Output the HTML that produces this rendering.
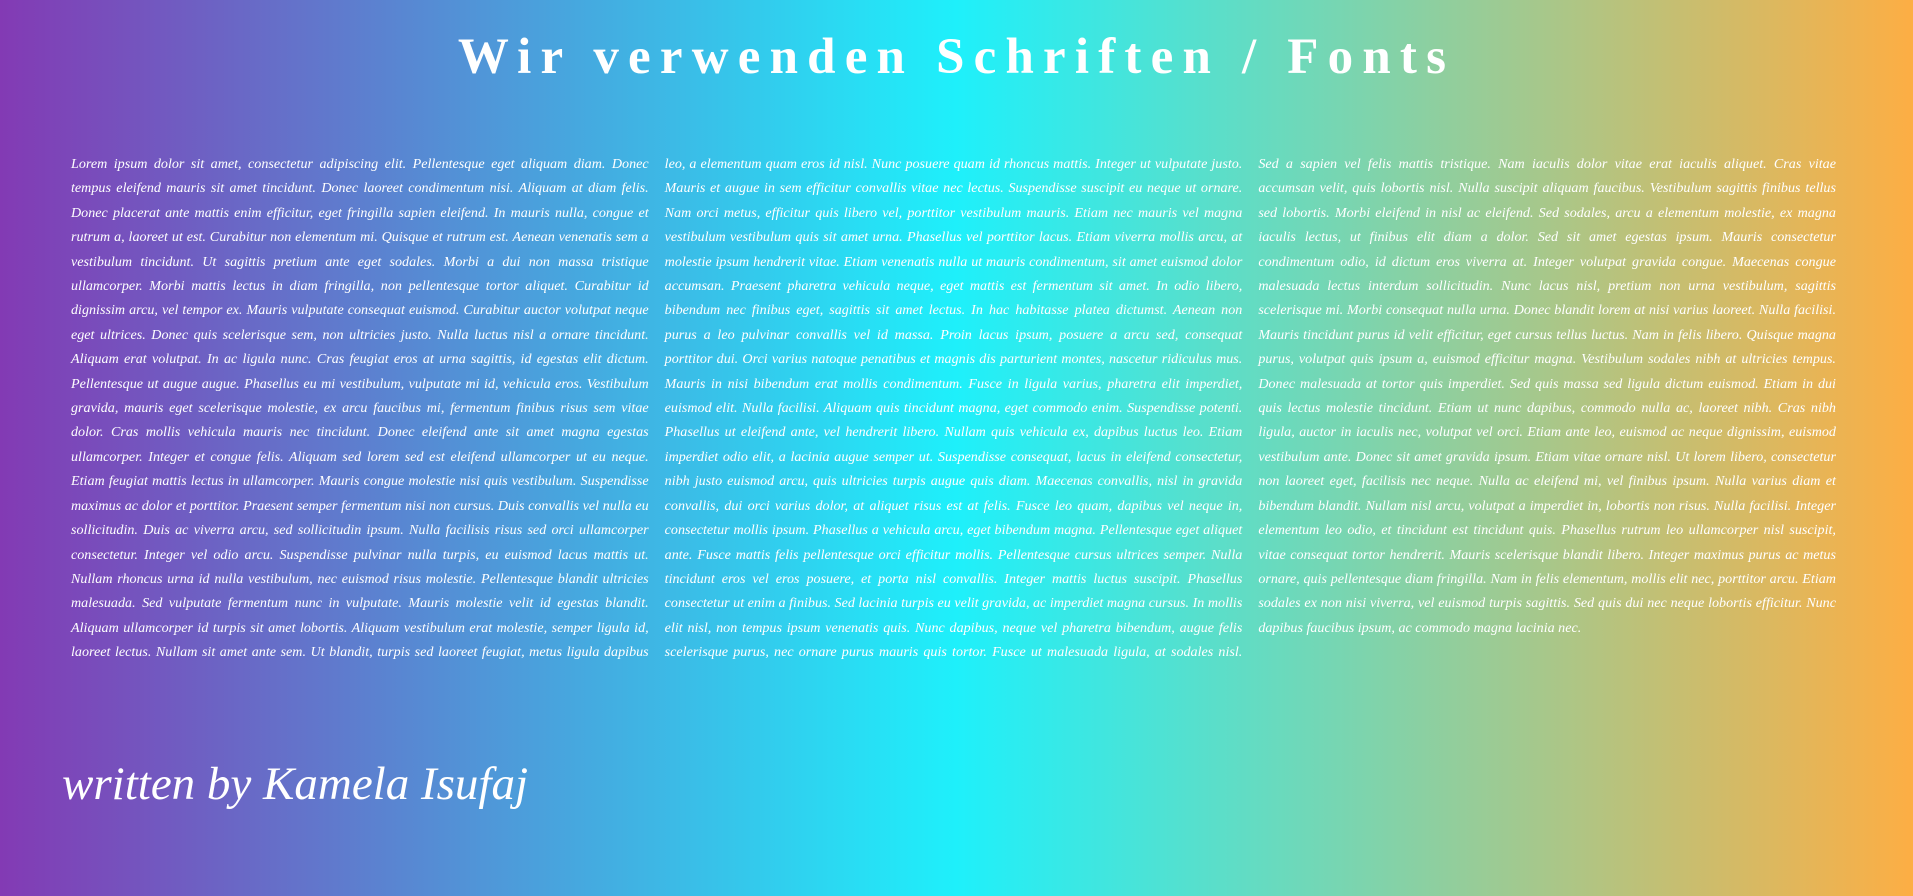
<!DOCTYPE html>
<html><head><meta charset="utf-8"><style>
html,body{margin:0;padding:0;width:1913px;height:896px;overflow:hidden}
body{background:linear-gradient(to right,#833ab4 0%,#1ef0fb 50%,#fdae44 100%);color:#fff;position:relative;font-family:"Liberation Serif",serif}
h1{position:absolute;top:22px;left:0;width:1913px;text-align:center;margin:0;font-size:51px;font-weight:bold;letter-spacing:9.2px;line-height:70px}
.txt{position:absolute;left:71px;top:152px;width:1765px;column-count:3;column-gap:16px;font-style:italic;font-size:14.1px;line-height:24.4px;text-align:justify;height:520px;column-fill:auto}
.sig{position:absolute;left:62px;top:744px;font-style:italic;font-size:47px;line-height:80px;font-family:"Liberation Serif",serif}
</style></head><body>
<h1>Wir verwenden Schriften / Fonts</h1>
<div class="txt">Lorem ipsum dolor sit amet, consectetur adipiscing elit. Pellentesque eget aliquam diam. Donec tempus eleifend mauris sit amet tincidunt. Donec laoreet condimentum nisi. Aliquam at diam felis. Donec placerat ante mattis enim efficitur, eget fringilla sapien eleifend. In mauris nulla, congue et rutrum a, laoreet ut est. Curabitur non elementum mi. Quisque et rutrum est. Aenean venenatis sem a vestibulum tincidunt. Ut sagittis pretium ante eget sodales. Morbi a dui non massa tristique ullamcorper. Morbi mattis lectus in diam fringilla, non pellentesque tortor aliquet. Curabitur id dignissim arcu, vel tempor ex. Mauris vulputate consequat euismod. Curabitur auctor volutpat neque eget ultrices. Donec quis scelerisque sem, non ultricies justo. Nulla luctus nisl a ornare tincidunt. Aliquam erat volutpat. In ac ligula nunc. Cras feugiat eros at urna sagittis, id egestas elit dictum. Pellentesque ut augue augue. Phasellus eu mi vestibulum, vulputate mi id, vehicula eros. Vestibulum gravida, mauris eget scelerisque molestie, ex arcu faucibus mi, fermentum finibus risus sem vitae dolor. Cras mollis vehicula mauris nec tincidunt. Donec eleifend ante sit amet magna egestas ullamcorper. Integer et congue felis. Aliquam sed lorem sed est eleifend ullamcorper ut eu neque. Etiam feugiat mattis lectus in ullamcorper. Mauris congue molestie nisi quis vestibulum. Suspendisse maximus ac dolor et porttitor. Praesent semper fermentum nisi non cursus. Duis convallis vel nulla eu sollicitudin. Duis ac viverra arcu, sed sollicitudin ipsum. Nulla facilisis risus sed orci ullamcorper consectetur. Integer vel odio arcu. Suspendisse pulvinar nulla turpis, eu euismod lacus mattis ut. Nullam rhoncus urna id nulla vestibulum, nec euismod risus molestie. Pellentesque blandit ultricies malesuada. Sed vulputate fermentum nunc in vulputate. Mauris molestie velit id egestas blandit. Aliquam ullamcorper id turpis sit amet lobortis. Aliquam vestibulum erat molestie, semper ligula id, laoreet lectus. Nullam sit amet ante sem. Ut blandit, turpis sed laoreet feugiat, metus ligula dapibus leo, a elementum quam eros id nisl. Nunc posuere quam id rhoncus mattis. Integer ut vulputate justo. Mauris et augue in sem efficitur convallis vitae nec lectus. Suspendisse suscipit eu neque ut ornare. Nam orci metus, efficitur quis libero vel, porttitor vestibulum mauris. Etiam nec mauris vel magna vestibulum vestibulum quis sit amet urna. Phasellus vel porttitor lacus. Etiam viverra mollis arcu, at molestie ipsum hendrerit vitae. Etiam venenatis nulla ut mauris condimentum, sit amet euismod dolor accumsan. Praesent pharetra vehicula neque, eget mattis est fermentum sit amet. In odio libero, bibendum nec finibus eget, sagittis sit amet lectus. In hac habitasse platea dictumst. Aenean non purus a leo pulvinar convallis vel id massa. Proin lacus ipsum, posuere a arcu sed, consequat porttitor dui. Orci varius natoque penatibus et magnis dis parturient montes, nascetur ridiculus mus. Mauris in nisi bibendum erat mollis condimentum. Fusce in ligula varius, pharetra elit imperdiet, euismod elit. Nulla facilisi. Aliquam quis tincidunt magna, eget commodo enim. Suspendisse potenti. Phasellus ut eleifend ante, vel hendrerit libero. Nullam quis vehicula ex, dapibus luctus leo. Etiam imperdiet odio elit, a lacinia augue semper ut. Suspendisse consequat, lacus in eleifend consectetur, nibh justo euismod arcu, quis ultricies turpis augue quis diam. Maecenas convallis, nisl in gravida convallis, dui orci varius dolor, at aliquet risus est at felis. Fusce leo quam, dapibus vel neque in, consectetur mollis ipsum. Phasellus a vehicula arcu, eget bibendum magna. Pellentesque eget aliquet ante. Fusce mattis felis pellentesque orci efficitur mollis. Pellentesque cursus ultrices semper. Nulla tincidunt eros vel eros posuere, et porta nisl convallis. Integer mattis luctus suscipit. Phasellus consectetur ut enim a finibus. Sed lacinia turpis eu velit gravida, ac imperdiet magna cursus. In mollis elit nisl, non tempus ipsum venenatis quis. Nunc dapibus, neque vel pharetra bibendum, augue felis scelerisque purus, nec ornare purus mauris quis tortor. Fusce ut malesuada ligula, at sodales nisl. Sed a sapien vel felis mattis tristique. Nam iaculis dolor vitae erat iaculis aliquet. Cras vitae accumsan velit, quis lobortis nisl. Nulla suscipit aliquam faucibus. Vestibulum sagittis finibus tellus sed lobortis. Morbi eleifend in nisl ac eleifend. Sed sodales, arcu a elementum molestie, ex magna iaculis lectus, ut finibus elit diam a dolor. Sed sit amet egestas ipsum. Mauris consectetur condimentum odio, id dictum eros viverra at. Integer volutpat gravida congue. Maecenas congue malesuada lectus interdum sollicitudin. Nunc lacus nisl, pretium non urna vestibulum, sagittis scelerisque mi. Morbi consequat nulla urna. Donec blandit lorem at nisi varius laoreet. Nulla facilisi. Mauris tincidunt purus id velit efficitur, eget cursus tellus luctus. Nam in felis libero. Quisque magna purus, volutpat quis ipsum a, euismod efficitur magna. Vestibulum sodales nibh at ultricies tempus. Donec malesuada at tortor quis imperdiet. Sed quis massa sed ligula dictum euismod. Etiam in dui quis lectus molestie tincidunt. Etiam ut nunc dapibus, commodo nulla ac, laoreet nibh. Cras nibh ligula, auctor in iaculis nec, volutpat vel orci. Etiam ante leo, euismod ac neque dignissim, euismod vestibulum ante. Donec sit amet gravida ipsum. Etiam vitae ornare nisl. Ut lorem libero, consectetur non laoreet eget, facilisis nec neque. Nulla ac eleifend mi, vel finibus ipsum. Nulla varius diam et bibendum blandit. Nullam nisl arcu, volutpat a imperdiet in, lobortis non risus. Nulla facilisi. Integer elementum leo odio, et tincidunt est tincidunt quis. Phasellus rutrum leo ullamcorper nisl suscipit, vitae consequat tortor hendrerit. Mauris scelerisque blandit libero. Integer maximus purus ac metus ornare, quis pellentesque diam fringilla. Nam in felis elementum, mollis elit nec, porttitor arcu. Etiam sodales ex non nisi viverra, vel euismod turpis sagittis. Sed quis dui nec neque lobortis efficitur. Nunc dapibus faucibus ipsum, ac commodo magna lacinia nec.</div>
<div class="sig">written by Kamela Isufaj</div>
</body></html>
